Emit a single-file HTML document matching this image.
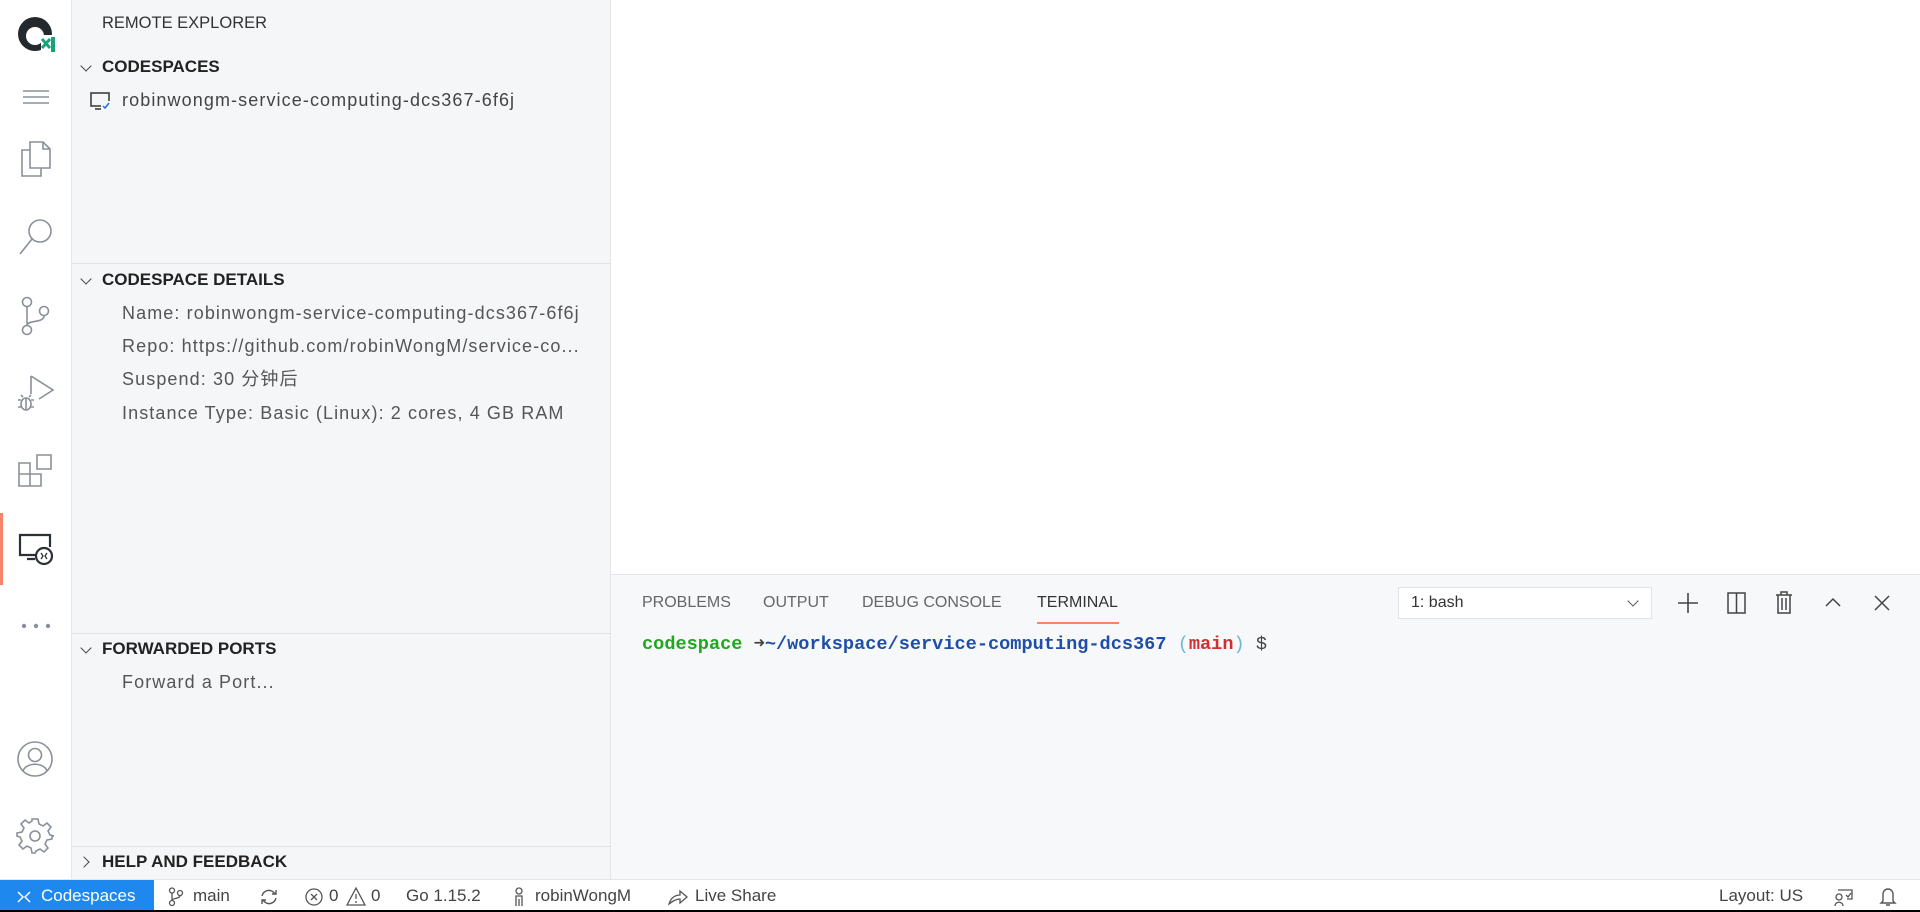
<!DOCTYPE html>
<html><head><meta charset="utf-8"><style>
*{margin:0;padding:0;box-sizing:border-box}
body{width:1920px;height:912px;overflow:hidden;background:#fff;font-family:"Liberation Sans","Noto Sans CJK SC",sans-serif;position:relative;color:#333}
.a{position:absolute}
#act{left:0;top:0;width:72px;height:879px;background:#fff;border-right:1px solid #e5e7ea}
#side{left:72px;top:0;width:539px;height:879px;background:#f5f6f8;border-right:1px solid #e3e5e8}
.t{position:absolute;white-space:nowrap;line-height:22px}
.h{font-weight:bold;font-size:17px;color:#222;left:30px}
.it{font-size:18px;letter-spacing:1.1px;color:#555;left:50px}
.div{position:absolute;left:0;width:539px;height:1px;background:#e0e2e6}
.chev{position:absolute;left:10px;width:8px;height:8px;border-left:1.5px solid #444;border-bottom:1.5px solid #444;transform:rotate(-45deg)}
#panel{left:611px;top:574px;width:1309px;height:305px;background:#f7f8f9;border-top:1px solid #e3e5e8}
.tab{position:absolute;top:19px;font-size:16px;color:#666}
#status{left:0;top:879px;width:1920px;height:33px;background:#fff;border-top:1px solid #e3e5e8;font-size:17px;color:#444}
#status .t{top:5px}
svg{position:absolute}
.ic{stroke:#8a9099;fill:none;stroke-width:1.6}
</style></head><body>
<div id="act" class="a">
<svg style="left:15px;top:15px" width="44" height="40" viewBox="0 0 44 40"><circle cx="20" cy="19" r="17" fill="#24292e"/><circle cx="20" cy="21" r="9" fill="#fff"/><path d="M12 12 L13 6 L17 9 M28 12 L27 6 L23 9" fill="#24292e"/><rect x="26" y="20" width="16" height="18" fill="#fff"/><path d="M27 24 L35 33 M27 33 L35 24" stroke="#1aa37a" stroke-width="3"/><rect x="36" y="22" width="4" height="15" fill="#1aa37a"/></svg>
<svg style="left:23px;top:89px" width="26" height="16"><path d="M0 2H26M0 8H26M0 14H26" stroke="#8a9099" stroke-width="1.5"/></svg>
<svg style="left:19px;top:141px" width="34" height="36"><path class="ic" d="M11 1H24L31 8V27H11Z M24 1V8H31 M11 9H3V35H22V27"/></svg>
<svg style="left:18px;top:218px" width="36" height="38"><circle class="ic" cx="22" cy="13" r="11" stroke-width="2"/><path class="ic" stroke-width="2" d="M14 21L2 36"/></svg>
<svg style="left:20px;top:296px" width="32" height="40"><circle class="ic" cx="7" cy="6" r="4.5"/><circle class="ic" cx="24" cy="15" r="4.5"/><circle class="ic" cx="7" cy="34" r="4.5"/><path class="ic" d="M7 11V29 M24 20C24 27 8 24 7 29"/></svg>
<svg style="left:17px;top:374px" width="40" height="40"><path class="ic" d="M14 2V20 M14 2L36 16L22 25" stroke-width="2"/><ellipse class="ic" cx="9" cy="30" rx="5" ry="6"/><path class="ic" d="M1 26H4M14 26H17M1 33H4M14 33H17M9 24V36M6 23L4 21M12 23L14 21"/></svg>
<svg style="left:18px;top:452px" width="36" height="38"><path class="ic" stroke-width="2" d="M1 11H12V22H23V34H1Z M1 22H12V34 M19 3H33V17H19Z"/></svg>
<div class="a" style="left:0;top:513px;width:3px;height:72px;background:#f7836b"></div>
<svg style="left:18px;top:533px" width="38" height="34"><path d="M19 22H2V2H32V14 M9 26H17" stroke="#2b2f36" stroke-width="2.2" fill="none"/><circle cx="26" cy="23" r="8" stroke="#2b2f36" stroke-width="2.2" fill="#fff"/><path d="M23 20L25 23L23 26M29 20L27 23L29 26" stroke="#2b2f36" stroke-width="1.3" fill="none"/></svg>
<svg style="left:21px;top:623px" width="32" height="6"><circle cx="3" cy="3" r="2.2" fill="#8a9099"/><circle cx="15" cy="3" r="2.2" fill="#8a9099"/><circle cx="27" cy="3" r="2.2" fill="#8a9099"/></svg>
<svg style="left:16px;top:740px" width="38" height="38"><circle class="ic" cx="19" cy="19" r="17" stroke-width="2"/><circle class="ic" cx="19" cy="15" r="6.5" stroke-width="2"/><path class="ic" stroke-width="2" d="M7 31C10 22 28 22 31 31"/></svg>
<svg style="left:16px;top:817px" width="38" height="38" viewBox="0 0 38 38"><path class="ic" stroke-width="2" d="M16 2H22L23 7L27 9L31 6L35 10L32 14L34 18L38 19V19H36V22L31 23L29 27L32 31L28 35L24 32L20 34L19 36H16L15 31L11 29L7 32L3 28L6 24L4 20L1 19V16L6 15L8 11L5 7L9 3L13 6L16 4Z"/><circle class="ic" stroke-width="2" cx="19" cy="19" r="5"/></svg>
</div>
<div id="side" class="a">
<div class="t" style="left:30px;top:12px;font-size:16.5px;color:#333">REMOTE EXPLORER</div>
<div class="chev" style="top:62px"></div><div class="t h" style="top:56px">CODESPACES</div>
<svg style="left:18px;top:92px" width="22" height="20"><path d="M11 14H1V1H19V9M5 17H11" stroke="#333" stroke-width="1.5" fill="none"/><path d="M13 14L15 16L19 11" stroke="#1a73d9" stroke-width="1.5" fill="none"/></svg>
<div class="t it" style="top:89px;color:#444">robinwongm-service-computing-dcs367-6f6j</div>
<div class="div" style="top:263px"></div>
<div class="chev" style="top:275px"></div><div class="t h" style="top:269px">CODESPACE DETAILS</div>
<div class="t it" style="top:302px">Name: robinwongm-service-computing-dcs367-6f6j</div>
<div class="t it" style="top:335px">Repo: https://github.com/robinWongM/service-co...</div>
<div class="t it" style="top:368px">Suspend: 30 分钟后</div>
<div class="t it" style="top:402px">Instance Type: Basic (Linux): 2 cores, 4 GB RAM</div>
<div class="div" style="top:633px"></div>
<div class="chev" style="top:644px"></div><div class="t h" style="top:638px">FORWARDED PORTS</div>
<div class="t it" style="top:671px">Forward a Port...</div>
<div class="div" style="top:846px"></div>
<div class="chev" style="top:858px;left:8px;transform:rotate(-135deg)"></div><div class="t h" style="top:851px">HELP AND FEEDBACK</div>
</div>
<div id="panel" class="a">
<div class="tab" style="left:31px">PROBLEMS</div>
<div class="tab" style="left:152px">OUTPUT</div>
<div class="tab" style="left:251px">DEBUG CONSOLE</div>
<div class="tab" style="left:426px;color:#333">TERMINAL</div>
<div class="a" style="left:426px;top:47px;width:82px;height:2px;background:#f7836b"></div>
<div class="a" style="left:787px;top:12px;width:254px;height:32px;background:#fff;border:1px solid #e0e2e6"><div class="t" style="left:12px;top:4px;font-size:16px;color:#333">1: bash</div><div class="a" style="right:14px;top:9px;width:8px;height:8px;border-right:1.5px solid #555;border-bottom:1.5px solid #555;transform:rotate(45deg)"></div></div>
<svg style="left:1066px;top:17px" width="22" height="22"><path d="M11 1V21M1 11H21" stroke="#444" stroke-width="1.6"/></svg>
<svg style="left:1116px;top:17px" width="20" height="22"><rect x="1" y="1" width="17" height="20" fill="none" stroke="#444" stroke-width="1.5"/><path d="M9.5 1V21" stroke="#444" stroke-width="1.5"/></svg>
<svg style="left:1164px;top:16px" width="18" height="23"><path d="M1 4H17M6 4V1H12V4M3 4V22H15V4M7 7V19M11 7V19" stroke="#444" stroke-width="1.5" fill="none"/></svg>
<svg style="left:1214px;top:22px" width="16" height="10"><path d="M1 9L8 2L15 9" stroke="#444" stroke-width="1.5" fill="none"/></svg>
<svg style="left:1263px;top:20px" width="16" height="16"><path d="M1 1L15 15M15 1L1 15" stroke="#444" stroke-width="1.5"/></svg>
<div class="t" style="left:31px;top:59px;font-family:'Liberation Mono',monospace;font-size:18.6px;font-weight:bold"><span style="color:#1fa81f">codespace</span> <span style="color:#444">➜</span><span style="color:#1f4ea8">~/workspace/service-computing-dcs367</span> <span style="color:#6bb7d4;font-weight:normal">(</span><span style="color:#d02f2f">main</span><span style="color:#6bb7d4;font-weight:normal">)</span> <span style="color:#444;font-weight:normal">$</span></div>
</div>
<div id="status" class="a">
<div class="a" style="left:0;top:0;width:154px;height:31px;background:#1e88ef"></div>
<svg style="left:16px;top:9px" width="16" height="16"><path d="M2 3L7 8L2 13M14 3L9 8L14 13" stroke="#fff" stroke-width="1.5" fill="none"/></svg>
<div class="t" style="left:41px;color:#fff">Codespaces</div>
<svg style="left:168px;top:7px" width="16" height="20"><circle cx="4" cy="3.5" r="2.5" stroke="#555" fill="none" stroke-width="1.3"/><circle cx="12" cy="6" r="2.5" stroke="#555" fill="none" stroke-width="1.3"/><circle cx="4" cy="16" r="2.5" stroke="#555" fill="none" stroke-width="1.3"/><path d="M4 6V13M12 8.5C12 12 5 11 4 13" stroke="#555" fill="none" stroke-width="1.3"/></svg>
<div class="t" style="left:193px">main</div>
<svg style="left:259px;top:8px" width="20" height="18"><path d="M3 8A7 7 0 0 1 16 6M17 10A7 7 0 0 1 4 12M13 6H17V2M7 12H3V16" stroke="#555" fill="none" stroke-width="1.4"/></svg>
<svg style="left:304px;top:7px" width="20" height="20"><circle cx="10" cy="10" r="8" stroke="#555" fill="none" stroke-width="1.3"/><path d="M7 7L13 13M13 7L7 13" stroke="#555" stroke-width="1.3"/></svg>
<div class="t" style="left:329px">0</div>
<svg style="left:346px;top:7px" width="20" height="19"><path d="M10 1L19 18H1Z M10 7V12M10 14V16" stroke="#555" fill="none" stroke-width="1.3"/></svg>
<div class="t" style="left:371px">0</div>
<div class="t" style="left:406px">Go 1.15.2</div>
<svg style="left:513px;top:7px" width="12" height="20"><circle cx="6" cy="4" r="3" stroke="#555" fill="none" stroke-width="1.3"/><path d="M3 19V9H9V19M6 12V19" stroke="#555" fill="none" stroke-width="1.3"/></svg>
<div class="t" style="left:535px">robinWongM</div>
<svg style="left:667px;top:7px" width="22" height="20"><path d="M2 17C4 10 9 8 13 8V4L20 10L13 16V12C9 12 6 14 2 17Z" stroke="#555" fill="none" stroke-width="1.3"/></svg>
<div class="t" style="left:695px">Live Share</div>
<div class="t" style="left:1719px">Layout: US</div>
<svg style="left:1832px;top:7px" width="22" height="20"><path d="M6 3H20V12H15M3 19C3 14 11 14 11 19M7 13A3 3 0 1 0 7 7A3 3 0 1 0 7 13M14 8L16 10L19 6" stroke="#555" fill="none" stroke-width="1.3"/></svg>
<svg style="left:1879px;top:6px" width="18" height="22"><path d="M4 15V8A5 5 0 0 1 14 8V15L16 17H2Z M7 19H11" stroke="#555" fill="none" stroke-width="1.4"/></svg>
</div>
<div class="a" style="left:0;top:910px;width:1920px;height:2px;background:#000"></div>
</body></html>
